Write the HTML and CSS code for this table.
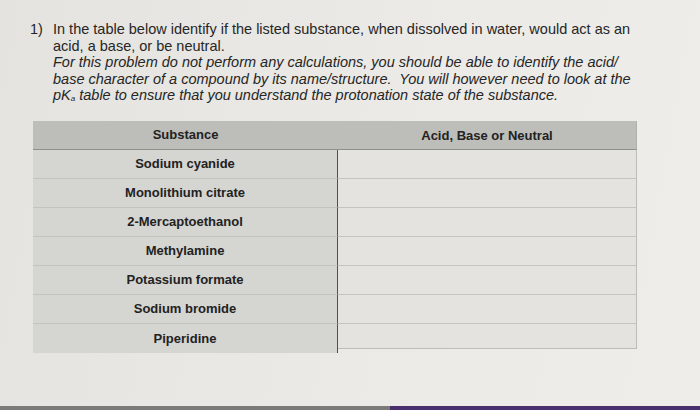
FILE: index.html
```html
<!DOCTYPE html>
<html>
<head>
<meta charset="utf-8">
<link rel="stylesheet" href="styles.css">
</head>
<body>
<div class="page">
  <div class="question">
    <div class="num">1)</div>
    <div class="text">
      <p class="plain">In the table below identify if the listed substance, when dissolved in water, would act as an<br>acid, a base, or be neutral.</p>
      <p class="ital">For this problem do not perform any calculations, you should be able to identify the acid/<br>base character of a compound by its name/structure.&nbsp; You will however need to look at the<br>pK<sub>a</sub> table to ensure that you understand the protonation state of the substance.</p>
    </div>
  </div>
  <div class="table">
    <div class="th left">Substance</div>
    <div class="th right">Acid, Base or Neutral</div>
    <div class="td name">Sodium cyanide</div><div class="td ans"></div>
    <div class="td name">Monolithium citrate</div><div class="td ans"></div>
    <div class="td name">2-Mercaptoethanol</div><div class="td ans"></div>
    <div class="td name">Methylamine</div><div class="td ans"></div>
    <div class="td name">Potassium formate</div><div class="td ans"></div>
    <div class="td name">Sodium bromide</div><div class="td ans"></div>
    <div class="td name last">Piperidine</div><div class="td ans last"></div>
  </div>
  <div class="spacer"></div>
  <div class="bottombar">
    <div class="grey"></div>
    <div class="purple"></div>
  </div>
</div>
</body>
</html>
```

FILE: styles.css
```css
html, body {
  margin: 0;
  padding: 0;
  width: 700px;
  height: 410px;
  overflow: hidden;
}
.page {
  width: 700px;
  height: 410px;
  display: flex;
  flex-direction: column;
  background: linear-gradient(100deg, #e4e3df 0%, #ebeae6 55%, #eeedea 100%);
  font-family: "Liberation Sans", Arial, sans-serif;
  color: #262626;
}
.question {
  display: flex;
  padding: 21px 0 0 30px;
  font-size: 14.5px;
  line-height: 16.5px;
}
.num {
  width: 23px;
  flex: none;
}
.text p {
  margin: 0;
  white-space: nowrap;
}
.ital {
  font-style: italic;
}
.ital sub {
  font-size: 8px;
  vertical-align: -1px;
  line-height: 0;
}
.table {
  margin: 17px 0 0 33px;
  width: 604px;
  display: grid;
  grid-template-columns: 305px 299px;
  grid-auto-rows: 29px;
}
.th {
  background: #bdbdb9;
  border-bottom: 1px solid #8f8f8c;
  font-weight: bold;
  font-size: 13px;
  color: #222;
  display: flex;
  align-items: center;
  justify-content: center;
}
.th.right {
  align-items: flex-start;
  padding-top: 7px;
  box-sizing: border-box;
  border-right: 1px solid #b0b0ac;
}
.td {
  font-weight: bold;
  font-size: 13px;
  color: #222;
  display: flex;
  align-items: center;
  justify-content: center;
  border-bottom: 1px solid #c3c3bf;
}
.name {
  background: #d5d5d1;
  border-right: 1px solid #5c4a55;
}
.ans {
  background: #e4e3df;
  border-right: 1px solid #bcbcb8;
}
.td.last {
  border-bottom: none;
}
.ans.last {
  border-bottom: 1px solid #bcbcb8;
  height: 24px;
}
.spacer {
  flex: 1;
}
.bottombar {
  display: flex;
  height: 4px;
}
.grey {
  width: 390px;
  background: #7a7a78;
}
.purple {
  flex: 1;
  background: #4a2f6e;
}
```
